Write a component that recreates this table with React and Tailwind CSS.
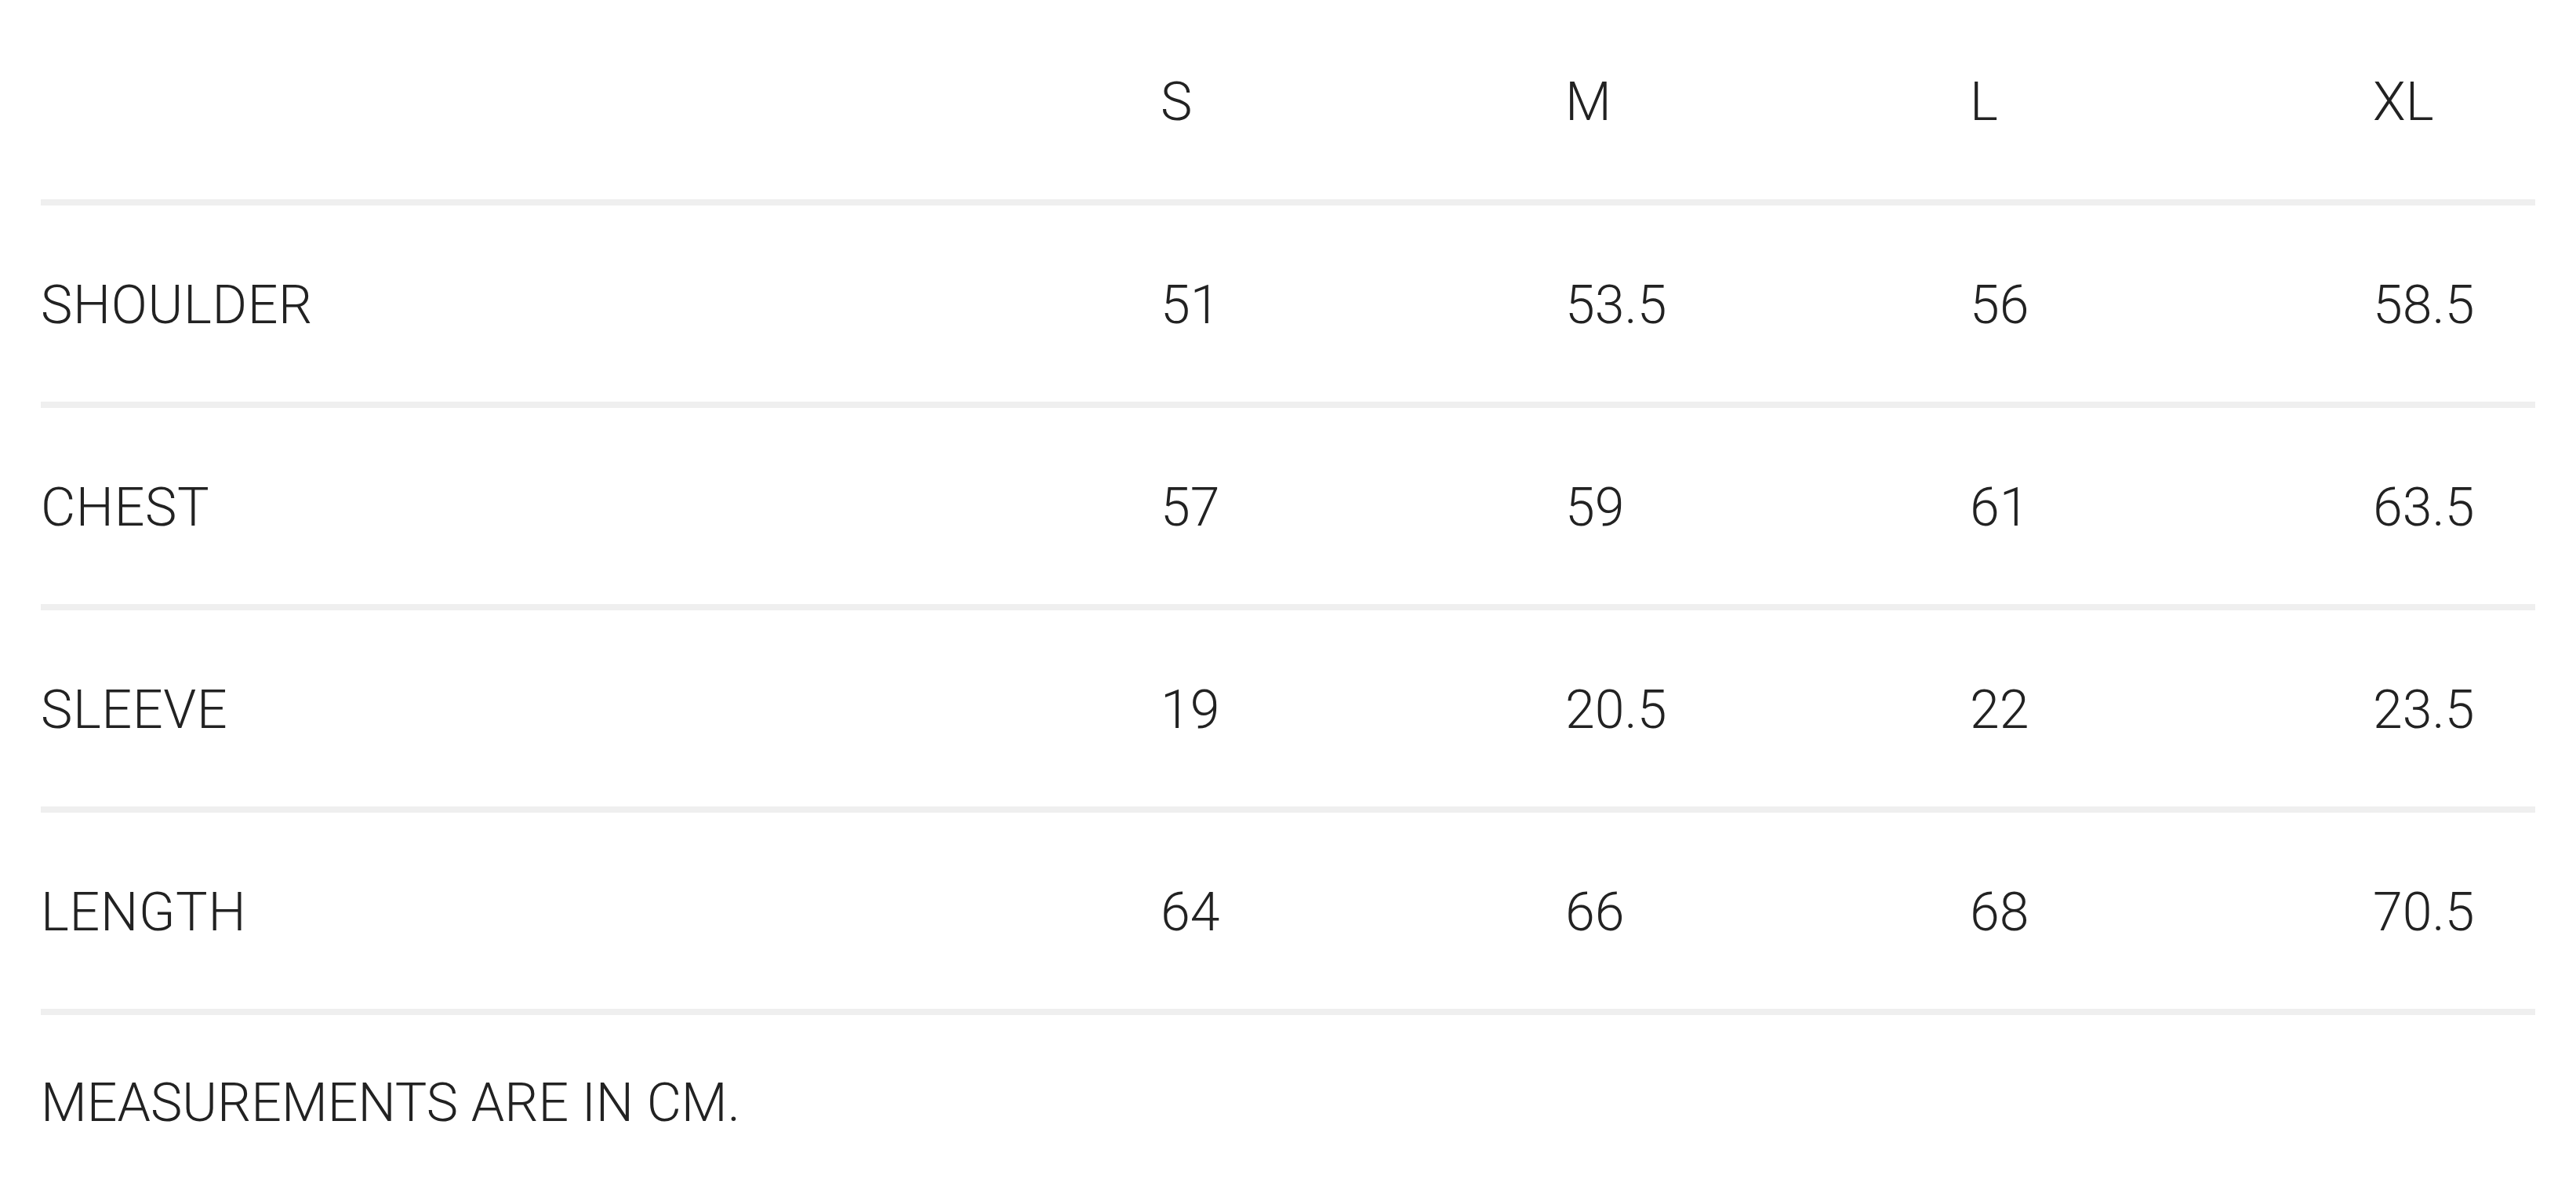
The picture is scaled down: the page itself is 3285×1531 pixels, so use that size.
const sizes = ['S', 'M', 'L', 'XL'];

const rows = [
    { label: 'SHOULDER', values: ['51', '53.5', '56', '58.5'] },
    { label: 'CHEST', values: ['57', '59', '61', '63.5'] },
    { label: 'SLEEVE', values: ['19', '20.5', '22', '23.5'] },
    { label: 'LENGTH', values: ['64', '66', '68', '70.5'] },
];

const App = () => {
    return (
        <div
            className="min-h-screen bg-white px-[52px] text-[#222] text-[68px] leading-none font-light"
            style={{ fontFamily: 'Roboto, "Liberation Sans", sans-serif' }}
        >
            {/* Size header */}
            <div className="grid grid-cols-[1428px_516px_516px_514px_1fr] items-center h-[262px] pt-[5px] border-b-8 border-[#efefef]">
                <div />
                {sizes.map(s => (
                    <div key={s}>{s}</div>
                ))}
            </div>

            {/* Measurements */}
            {rows.map(r => (
                <div
                    key={r.label}
                    className="grid grid-cols-[1428px_516px_516px_514px_1fr] items-center h-[258px] pt-1 border-b-8 border-[#efefef]"
                >
                    <div className="tracking-[0.01em]">{r.label}</div>
                    {r.values.map((v, i) => (
                        <div key={i}>{v}</div>
                    ))}
                </div>
            ))}

            <div className="flex items-center h-[220px] pt-1">MEASUREMENTS ARE IN CM.</div>
        </div>
    );
};

export default App;
